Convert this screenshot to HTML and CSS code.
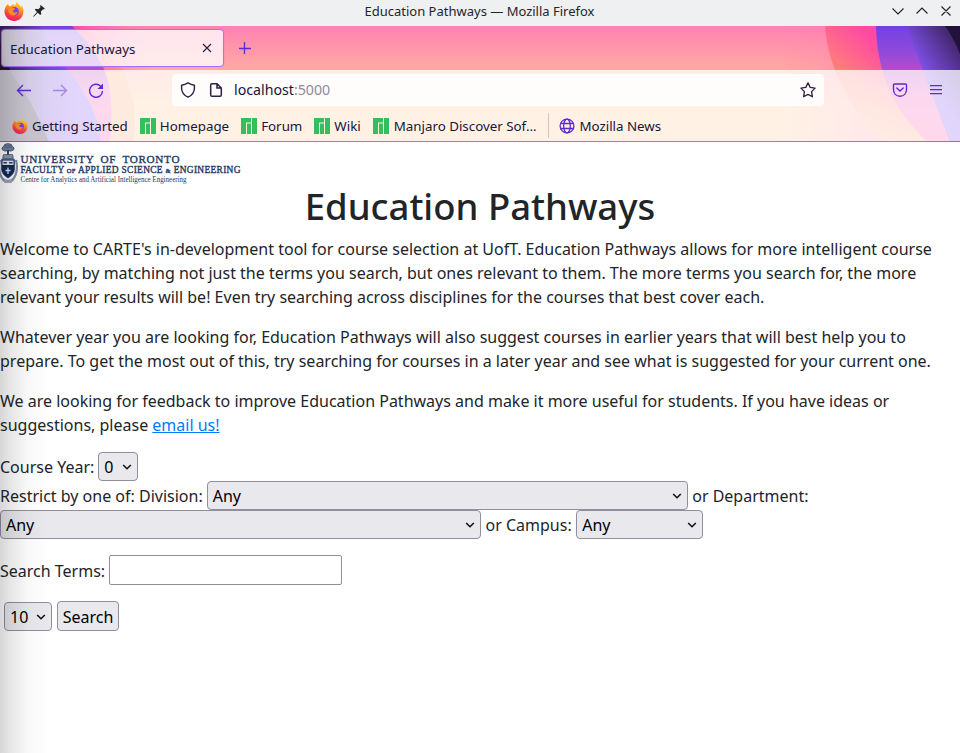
FILE: index.html
```html
<!DOCTYPE html>
<html lang="en">
<head>
<meta charset="utf-8">
<title>Education Pathways</title>
<link rel="stylesheet" href="styles.css">
</head>
<body>
<svg class="defs" width="0" height="0" aria-hidden="true">
  <defs>
    <linearGradient id="fx-body" x1="0.7" y1="0" x2="0.35" y2="1">
      <stop offset="0" stop-color="#ffe23c"/><stop offset="0.35" stop-color="#ff9a25"/><stop offset="0.7" stop-color="#fb4141"/><stop offset="1" stop-color="#e51c72"/>
    </linearGradient>
    <symbol id="firefox" viewBox="0 0 20 20">
      <path d="M2.6 4.2 L4 3 L5 5 L7 5 C8 3.5 9.5 3 9.5 3 L10 5 C12 4 12 2 12.8 .4 C14 3 16 4 17.2 6.4 L17.4 4 C19.5 7 20 10 19 13.5 C17.5 18 14 20 10 20 C5 20 .8 16 .5 11 C.3 8 1.5 6 2.6 4.2Z" fill="url(#fx-body)"/>
      <circle cx="10.4" cy="10.4" r="4.4" fill="#7542e5"/>
      <path d="M4.5 7.5 C6 6 8 6.2 9.4 7 L11.2 7.4 C11 9 9 9 8.8 9.8 C9 12 12 12 13.5 10.8 C13 14 10 15.5 7.5 14.2 C4.5 12.8 4 10 4.5 7.5Z" fill="#ff8a22"/>
    </symbol>
    <symbol id="manjaro" viewBox="0 0 16 16">
      <path d="M0 0h10v4.5H5V16H0z M6 5.5h4V16H6z M11 0h5v16h-5z" fill="#35bf5c"/>
    </symbol>
    <symbol id="chev" viewBox="0 0 10 6"><path d="M1.2 1 L5 4.7 L8.8 1" fill="none" stroke="#111" stroke-width="1.6"/></symbol>
  </defs>
</svg>

<header class="titlebar">
  <svg class="app-icon" width="20" height="20"><use href="#firefox"/></svg>
  <svg class="pin" width="12" height="12" viewBox="0 0 12 12"><path d="M7.6 0 L11.8 3.6 L10.8 4.4 L10 4.2 L7.8 6.5 L8.3 9 L7.2 10 L4.7 7.7 L.7 11.7 L.2 11.3 L4 7 L1.8 4.8 L2.7 3.8 L5.4 4.2 L7.6 2 L7 .9Z" fill="#232629"/></svg>
  <span class="window-title">Education Pathways — Mozilla Firefox</span>
  <svg class="window-buttons" width="62" height="14" viewBox="0 0 62 14" fill="none" stroke="#232629" stroke-width="1.15"><path d="M1.5 4.5 L7 10 L12.5 4.5 M25.5 9.5 L31 4 L36.5 9.5 M50.5 2.5 L59.5 11.5 M59.5 2.5 L50.5 11.5"/></svg>
</header>

<div class="chrome">
  <svg class="theme" width="960" height="116" viewBox="0 0 960 116" preserveAspectRatio="none" aria-hidden="true">
    <defs>
      <linearGradient id="sky" x1="0" y1="0" x2="0" y2="1"><stop offset="0" stop-color="#ff82b2"/><stop offset=".38" stop-color="#ffaaa2"/><stop offset=".7" stop-color="#ffc794"/><stop offset="1" stop-color="#ffc794"/></linearGradient>
      <linearGradient id="coral" x1="0" y1="1" x2="1" y2="0"><stop offset="0" stop-color="#ffb886"/><stop offset=".35" stop-color="#ff8078"/><stop offset=".62" stop-color="#ff4aa2"/><stop offset="1" stop-color="#ff4aa2"/></linearGradient>
      <linearGradient id="shade" x1="0" y1="0" x2="0" y2="1"><stop offset=".35" stop-color="#ffc09a" stop-opacity="0"/><stop offset="1" stop-color="#ffc09a" stop-opacity=".65"/></linearGradient>
      <linearGradient id="violet" x1="0" y1="0" x2="0" y2="1"><stop offset="0" stop-color="#7440e4"/><stop offset=".18" stop-color="#8848dd"/><stop offset=".38" stop-color="#b54ccb"/><stop offset=".6" stop-color="#f05bc0"/><stop offset="1" stop-color="#ff5da8"/></linearGradient>
      <linearGradient id="indigo" x1="0" y1="1" x2=".7" y2="0"><stop offset="0" stop-color="#8855ff"/><stop offset=".55" stop-color="#8152ef"/><stop offset="1" stop-color="#43286f"/></linearGradient>
      <linearGradient id="glow" x1="0" y1="0" x2="1" y2="0"><stop offset="0" stop-color="#ff82b2" stop-opacity="0"/><stop offset="1" stop-color="#ff82b2" stop-opacity=".6"/></linearGradient>
      <linearGradient id="leftpink" x1="0" y1="0" x2="1" y2="0"><stop offset="0" stop-color="#ff4aa2"/><stop offset=".5" stop-color="#ff4aa2"/><stop offset="1" stop-color="#ff82b2" stop-opacity="0"/></linearGradient>
      <linearGradient id="leftpurple" x1="0" y1="0" x2="1" y2="0"><stop offset="0" stop-color="#35205c"/><stop offset=".4" stop-color="#6a41c4"/><stop offset=".7" stop-color="#8152ee"/><stop offset="1" stop-color="#8556f8"/></linearGradient>
    </defs>
    <rect width="960" height="116" fill="url(#sky)"/>
    <path d="M0 0H90C108 14 118 30 124 48Q140 84 133 116H0Z" fill="#ffa678"/>
    <rect width="150" height="46" fill="url(#leftpink)"/>
    <path d="M0 0H72C92 20 104 38 108 55Q114 82 110 116H0Z" fill="url(#violet)"/>
    <path d="M0 0H40C48 16 57 28 68 44C86 68 99 88 101 116H0Z" fill="url(#leftpurple)"/>
    <path d="M0 0V14C3 32 9 44 18 57C31 75 40 94 49 116H0Z" fill="#21143a"/>
    <rect x="780" width="104" height="116" fill="url(#glow)"/>
    <path d="M825 0C828 43 850 83 884 116H960V0Z" fill="url(#coral)"/>
    <path d="M825 0C828 43 850 83 884 116H928C892 83 877 45 876 0Z" fill="url(#shade)"/>
    <path d="M876 0C877 45 892 83 928 116H960V0Z" fill="url(#violet)"/>
    <path d="M906 0L950 116H960V0Z" fill="url(#indigo)"/>
    <path d="M945 0Q954 12 960 28V0Z" fill="#20123a"/>
  </svg>
  <div class="tabs">
    <div class="tab"><span>Education Pathways</span>
      <svg width="10" height="10" viewBox="0 0 10 10"><path d="M1 1 L9 9 M9 1 L1 9" stroke="#2b2044" stroke-width="1.2"/></svg></div>
    <svg class="plus" width="12" height="12" viewBox="0 0 12 12"><path d="M5.5 0V12 M0 6.5H12" stroke="#5b2bd0" stroke-width="1.3"/></svg>
  </div>
  <nav class="toolbar">
    <svg class="nav-icons" width="90" height="18" viewBox="0 0 90 18" fill="none" stroke="#5b2bd0" stroke-width="1.4">
      <path d="M15 9.5H1.5 M7 4 L1.5 9.5 L7 15"/>
      <path d="M37 9.5H50.5 M45 4 L50.5 9.5 L45 15" opacity=".45"/>
      <path d="M84.8 5.4 A6.5 6.5 0 1 0 86.5 10"/><path d="M87 2.5V8H81.5Z" fill="#5b2bd0" stroke="none"/>
    </svg>
    <div class="urlbar">
      <svg width="16" height="16" viewBox="0 0 16 16" fill="none" stroke="#2b2044" stroke-width="1.4" stroke-linejoin="round"><path d="M8 .9Q11 2.7 14.4 3.2V6.5C14.2 10.5 11.8 13.5 8 15.2C4.2 13.5 1.8 10.5 1.6 6.5V3.2Q5 2.7 8 .9Z"/></svg>
      <svg width="14" height="16" viewBox="0 0 14 16"><path d="M2.8 1.7H8L12.3 6V13Q12.3 14.3 11 14.3H3Q1.7 14.3 1.7 13V3Q1.7 1.7 2.8 1.7Z M8 1.7V6H12.3" fill="none" stroke="#2b2044" stroke-width="1.5"/></svg>
      <span class="url">localhost<i>:5000</i></span>
      <svg class="star" width="16" height="16" viewBox="0 0 16 16"><path d="M8 .9L10.2 5.4L15.1 6.1L11.6 9.6L12.4 14.8L8 12.4L3.6 14.8L4.4 9.6L.9 6.1L5.8 5.4Z" fill="none" stroke="#2b2044" stroke-width="1.3" stroke-linejoin="round"/></svg>
    </div>
    <svg class="pocket" width="16" height="14" viewBox="0 0 16 14" fill="none" stroke="#5b2bd0" stroke-width="1.4" stroke-linecap="round"><path d="M2.6 1H13.4Q14.5 1 14.5 2.2V6.5C14.5 10.5 11.8 13.2 8 13.2C4.2 13.2 1.5 10.5 1.5 6.5V2.2Q1.5 1 2.6 1Z M4.8 5L8 8.1L11.2 5"/></svg>
    <svg class="menu" width="14" height="12" viewBox="0 0 14 12"><path d="M1 1.6H13 M1 5.6H13 M1 9.6H13" stroke="#5b2bd0" stroke-width="1.3"/></svg>
  </nav>
  <div class="bookmarks">
    <span class="bookmark start"><svg width="16" height="16"><use href="#firefox"/></svg>Getting Started</span>
    <span class="bookmark"><svg width="16" height="16"><use href="#manjaro"/></svg>Homepage</span>
    <span class="bookmark"><svg width="16" height="16"><use href="#manjaro"/></svg>Forum</span>
    <span class="bookmark"><svg width="16" height="16"><use href="#manjaro"/></svg>Wiki</span>
    <span class="bookmark discover"><svg width="16" height="16"><use href="#manjaro"/></svg>Manjaro Discover Sof…</span>
    <span class="bookmark news"><svg width="16" height="16" viewBox="0 0 16 16" fill="none" stroke="#5b2bd0" stroke-width="1.3"><circle cx="8" cy="8" r="6.9"/><ellipse cx="8" cy="8" rx="3.3" ry="6.9"/><path d="M1.4 5.5H14.6 M1.4 10.5H14.6"/></svg>Mozilla News</span>
  </div>
</div>

<main>
  <svg class="logo" width="242" height="44" viewBox="0 0 242 44" fill="#1e3765">
    <g stroke="#1e3765" stroke-width=".6">
      <path d="M2.5 8Q.8 5.5 3.5 4.5Q4 1.5 8 1.6Q12 1.5 12.5 4.5Q15.2 5.5 13.5 8Q11 10 8 8.5Q5 10 2.5 8Z" fill="#73849f"/>
      <path d="M4 6Q6 4 8 6Q10 4 12 6 M5 3.5Q8 5 11 3.5" fill="none" stroke="#3e5379"/>
      <path d="M8 8V13" stroke-width="1.8"/>
      <path d="M3.5 12.5H12.5L13.5 16.5H2.5Z" fill="#8c9bb1"/>
      <path d="M0 18C-2 26 0 34 4 39M16 18C18 26 16 34 12 39" fill="none" stroke="#7f90a9" stroke-width="2.2"/>
      <path d="M1.5 17.5H14.5V27C14.5 31 11.5 34 8 36C4.5 34 1.5 31 1.5 27Z" fill="#122b5b"/>
      <path d="M2.5 18.5H13.5V23H2.5Z" fill="#e3e7ed" stroke="none"/><path d="M3.5 20.8H6.8 M9.2 20.8H12.5" fill="none" stroke-width="1.4"/>
      <path d="M8 25.5V32 M5.5 28.5H10.5" stroke="#dfe4eb" stroke-width="1.3"/>
      <path d="M3.5 36.5Q8 40 12.5 36.5L11.5 40.5H4.5Z" fill="#9aa8bb" stroke="#8091aa"/>
    </g>
    <text class="uni" x="20.5" y="20.6" textLength="159">UNIVERSITY OF TORONTO</text>
    <text class="faculty" x="20.5" y="30.6" textLength="220">FACULTY <tspan class="small">OF</tspan> APPLIED SCIENCE <tspan class="small">&amp;</tspan> ENGINEERING</text>
    <text class="centre" x="20.5" y="40.3" textLength="166" lengthAdjust="spacingAndGlyphs">Centre for Analytics and Artificial Intelligence Engineering</text>
  </svg>
  <h1>Education Pathways</h1>
  <p>Welcome to CARTE's in-development tool for course selection at UofT. Education Pathways allows for more intelligent course<br>searching, by matching not just the terms you search, but ones relevant to them. The more terms you search for, the more<br>relevant your results will be! Even try searching across disciplines for the courses that best cover each.</p>
  <p>Whatever year you are looking for, Education Pathways will also suggest courses in earlier years that will best help you to<br>prepare. To get the most out of this, try searching for courses in a later year and see what is suggested for your current one.</p>
  <p>We are looking for feedback to improve Education Pathways and make it more useful for students. If you have ideas or<br>suggestions, please <a href="#">email us!</a></p>
  <form>
    <div class="row"><label>Course Year:</label><span class="select year">0<svg width="10" height="6"><use href="#chev"/></svg></span></div>
    <div class="row"><label>Restrict by one of: Division:</label><span class="select wide">Any<svg width="10" height="6"><use href="#chev"/></svg></span><label class="after">or Department:</label></div>
    <div class="row"><span class="select wide">Any<svg width="10" height="6"><use href="#chev"/></svg></span><label class="after">or Campus:</label><span class="select campus">Any<svg width="10" height="6"><use href="#chev"/></svg></span></div>
    <div class="row terms"><label>Search Terms:</label><input type="text"></div>
    <div class="row submit"><span class="select count">10<svg width="10" height="6"><use href="#chev"/></svg></span><button type="button">Search</button></div>
  </form>
</main>
<div class="edge-shadow"></div>
</body>
</html>
```
FILE: styles.css
```css
* { box-sizing: border-box; }
body {
  margin: 0;
  height: 753px;
  overflow: hidden;
  position: relative;
  background: #fff;
  color: #212529;
  font: 16px/24px "Noto Sans", sans-serif;
}
svg { display: block; flex: none; }
.defs { position: absolute; }
.titlebar {
  height: 26px;
  display: flex;
  align-items: center;
  padding: 0 7px 4px 4px;
  background: #eff0f1;
  font-size: 13px;
  color: #232629;
}
.pin { margin-left: 9px; }
.window-title { flex: 1; text-align: center; padding-left: 23px; }
.chrome {
  position: relative;
  height: 116px;
  font-size: 13.33px;
  color: #20123a;
}
.theme { position: absolute; left: 0; top: 0; }
.tabs, .toolbar, .bookmarks { position: relative; display: flex; align-items: center; }
.tabs { height: 44px; padding-left: 1px; }
.tab {
  width: 223px;
  height: 38px;
  display: flex;
  align-items: center;
  justify-content: space-between;
  padding: 0 11px 0 8px;
  border: 1px solid #ac70ff;
  border-radius: 4px;
  background: rgba(255, 255, 255, .78);
  box-shadow: 0 0 1px #ac70ff;
}
.tab span { padding-top: 2px; }
.plus { margin-left: 15px; }
.toolbar { height: 40px; padding-left: 16px; background: rgba(255, 255, 255, .76); }
.urlbar {
  width: 652px;
  height: 32px;
  margin-left: 66px;
  padding: 0 8px;
  display: flex;
  align-items: center;
  border-radius: 4px;
  background: rgba(255, 255, 255, .84);
  font-size: 14.2px;
}
.urlbar svg + svg { margin-left: 13px; }
.url { margin-left: 11px; }
.url i { font-style: normal; color: #8f889d; }
.star { margin-left: auto; }
.pocket { margin-left: 68px; }
.menu { margin-left: 21px; }
.bookmarks {
  height: 32px;
  padding-left: 12px;
  background: rgba(255, 255, 255, .76);
  border-bottom: 1px solid rgba(70, 20, 60, .5);
}
.bookmark { display: flex; align-items: center; gap: 4px; margin-right: 12px; white-space: nowrap; }
.discover { margin-right: 11px; gap: 5px; }
.news { height: 25px; margin-left: 1px; padding-left: 10px; border-left: 1px solid #d2c3c4; }
.logo { width: 242px; height: 44px; overflow: hidden; font-family: "Liberation Serif", serif; }
.uni { font-size: 11.2px; stroke: #1e3765; stroke-width: .35px; word-spacing: 3px; }
.faculty { font-size: 9.4px; stroke: #1e3765; stroke-width: .35px; }
.faculty .small { font-size: 6.5px; }
.centre { font-size: 7.2px; }
h1 {
  height: 43px;
  margin: 0 0 8px;
  text-align: center;
  font-size: 36.5px;
  font-weight: 500;
  line-height: 40px;
}
p { margin: 0 0 16px; white-space: nowrap; }
a { color: #007bff; }
form { margin-top: -1px; }
.row { display: flex; align-items: center; height: 29px; gap: 4px; white-space: nowrap; }
.select, button {
  height: 29px;
  display: flex;
  align-items: center;
  border: 1px solid #8f8f9d;
  border-radius: 4px;
  background: #e9e9ed;
  color: #000;
  padding: 0 5px;
}
.after { margin-left: .5px; margin-right: .5px; }
.select { justify-content: space-between; }
.year { width: 40px; }
.wide { width: 481px; }
.campus { width: 127px; }
.count { width: 48px; }
.terms { height: 30px; margin-top: 16px; }
.terms label { padding-top: 2px; }
.terms input { width: 233px; height: 30px; border: 1px solid #8f8f9d; border-radius: 2px; background: #fff; }
.submit { height: 30px; margin-top: 16px; padding: 1px 0 0 4px; gap: 5px; }
button { width: 62px; height: 30px; font: inherit; justify-content: center; margin-top: -1px; padding: 2px 0 0; }
.edge-shadow {
  position: absolute;
  left: 0;
  top: 26px;
  width: 50px;
  height: 727px;
  pointer-events: none;
  background: linear-gradient(90deg, rgba(0,0,0,.16), rgba(0,0,0,.1) 20%, rgba(0,0,0,.028) 55%, transparent);
}
```
